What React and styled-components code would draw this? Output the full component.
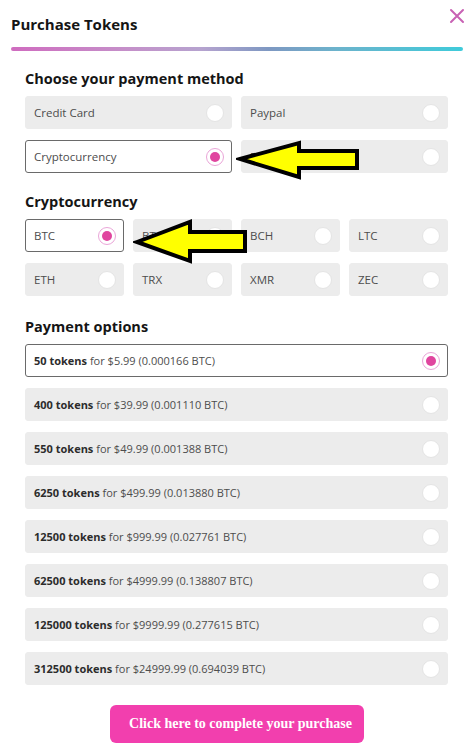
import React from "react";
import styled, { createGlobalStyle } from "styled-components";

const Global = createGlobalStyle`
  html, body { margin: 0; padding: 0; background: #ffffff; }
  body { font-family: "Open Sans", "Noto Sans", sans-serif; color: #333; }
  * { box-sizing: border-box; }
`;

const Page = styled.div`
  position: relative;
  width: 474px;
  padding: 0 11px 9px;
`;

const Header = styled.div`
  display: flex;
  align-items: center;
  justify-content: space-between;
  height: 47px;
`;

const Title = styled.h1`
  margin: 0;
  font-size: 15px;
  font-weight: 700;
  color: #151515;
  line-height: 20px;
`;

const Close = styled.button`
  border: 0;
  background: none;
  padding: 0;
  margin: -16px -5px 0 0;
  width: 22px;
  height: 22px;
  display: flex;
  align-items: center;
  justify-content: center;
  cursor: pointer;
`;

const GradientBar = styled.div`
  height: 4px;
  border-radius: 2px;
  background: linear-gradient(90deg, #cf6cbf 0%, #c58fc9 25%, #b6a3cf 42%, #7e98c2 57%, #6cb3cc 72%, #3fcbda 100%);
`;

const Content = styled.div`
  padding: 0 15px 0 14px;
`;

const Heading = styled.h2`
  margin: ${(p) => p.$top}px 0 7px;
  font-size: 14.5px;
  font-weight: 700;
  color: #151515;
  line-height: 20px;
`;

const Grid = styled.div`
  display: grid;
  grid-template-columns: repeat(${(p) => p.$cols}, 1fr);
  column-gap: 9px;
  row-gap: 11px;
`;

const List = styled.div`
  display: flex;
  flex-direction: column;
  gap: 11px;
`;

const Option = styled.div`
  height: 33px;
  display: flex;
  align-items: center;
  justify-content: space-between;
  padding: 0 7px 0 8px;
  border-radius: 3px;
  background: ${(p) => (p.$selected ? "#ffffff" : "#ececec")};
  border: 1px solid ${(p) => (p.$selected ? "#6a6a6a" : "#ececec")};
  font-size: ${(p) => p.$size || 11.5}px;
  color: #4d4d4d;
`;

const Label = styled.span`
  white-space: nowrap;
  b { font-weight: 700; color: #2c2c2c; }
`;

const RadioEmpty = styled.span`
  width: 18px;
  height: 18px;
  border-radius: 50%;
  background: #ffffff;
  border: 1px solid #e4e4e4;
  flex: none;
`;

const RadioOn = styled.span`
  width: 18px;
  height: 18px;
  border-radius: 50%;
  background: #ffffff;
  border: 1.5px solid #eaa5d8;
  display: flex;
  align-items: center;
  justify-content: center;
  flex: none;
  &::after {
    content: "";
    width: 10px;
    height: 10px;
    border-radius: 50%;
    background: #e0459f;
  }
`;

const ButtonRow = styled.div`
  display: flex;
  justify-content: center;
  margin-top: 20px;
`;

const Submit = styled.button`
  width: 254px;
  height: 38px;
  border: 0;
  border-radius: 6px;
  background: #f23fae;
  color: #ffffff;
  font-family: "Liberation Serif", "DejaVu Serif", serif;
  font-weight: 700;
  font-size: 14px;
  padding: 0 0 0 8px;
  cursor: pointer;
`;

const ArrowSvg = styled.svg`
  position: absolute;
  left: ${(p) => p.$left}px;
  top: ${(p) => p.$top}px;
  pointer-events: none;
`;

function Radio({ on }) {
  return on ? <RadioOn /> : <RadioEmpty />;
}

function Choice({ label, selected }) {
  return (
    <Option $selected={selected}>
      <Label>{label}</Label>
      <Radio on={selected} />
    </Option>
  );
}

function Arrow({ left, top, w, h, points }) {
  return (
    <ArrowSvg $left={left} $top={top} width={w} height={h} viewBox={`0 0 ${w} ${h}`}>
      <polygon points={points} fill="#ffff00" stroke="#000000" strokeWidth="4" strokeLinejoin="miter" />
    </ArrowSvg>
  );
}

const methods = [
  { label: "Credit Card" },
  { label: "Paypal" },
  { label: "Cryptocurrency", selected: true },
  { label: "Bank Transfers" },
];

const coins = ["BTC", "BTG", "BCH", "LTC", "ETH", "TRX", "XMR", "ZEC"];

const packs = [
  ["50", "5.99", "0.000166"],
  ["400", "39.99", "0.001110"],
  ["550", "49.99", "0.001388"],
  ["6250", "499.99", "0.013880"],
  ["12500", "999.99", "0.027761"],
  ["62500", "4999.99", "0.138807"],
  ["125000", "9999.99", "0.277615"],
  ["312500", "24999.99", "0.694039"],
];

export default function App() {
  return (
    <>
      <Global />
      <Page>
        <Header>
          <Title>Purchase Tokens</Title>
          <Close aria-label="Close">
            <svg width="16" height="16" viewBox="0 0 16 16">
              <path d="M2 2 L14 14 M14 2 L2 14" stroke="#c862b4" strokeWidth="2" strokeLinecap="round" />
            </svg>
          </Close>
        </Header>
        <GradientBar />
        <Content>
          <Heading $top={18}>Choose your payment method</Heading>
          <Grid $cols={2}>
            {methods.map((m) => (
              <Choice key={m.label} label={m.label} selected={m.selected} />
            ))}
          </Grid>
          <Heading $top={19}>Cryptocurrency</Heading>
          <Grid $cols={4}>
            {coins.map((c, i) => (
              <Choice key={c} label={c} selected={i === 0} />
            ))}
          </Grid>
          <Heading $top={21}>Payment options</Heading>
          <List>
            {packs.map(([t, usd, btc], i) => (
              <Option key={t} $selected={i === 0} $size={11}>
                <Label>
                  <b>{t} tokens</b> for ${usd} ({btc} BTC)
                </Label>
                <Radio on={i === 0} />
              </Option>
            ))}
          </List>
          <ButtonRow>
            <Submit>Click here to complete your purchase</Submit>
          </ButtonRow>
        </Content>
        <Arrow left={236} top={139} w={126} h={42} points="4,20 63,4 63,12 121,12 121,29 63,29 63,38" />
        <Arrow left={133} top={218} w={116} h={47} points="4,24 57,4 57,14 112,14 112,33 57,33 57,43" />
      </Page>
    </>
  );
}
